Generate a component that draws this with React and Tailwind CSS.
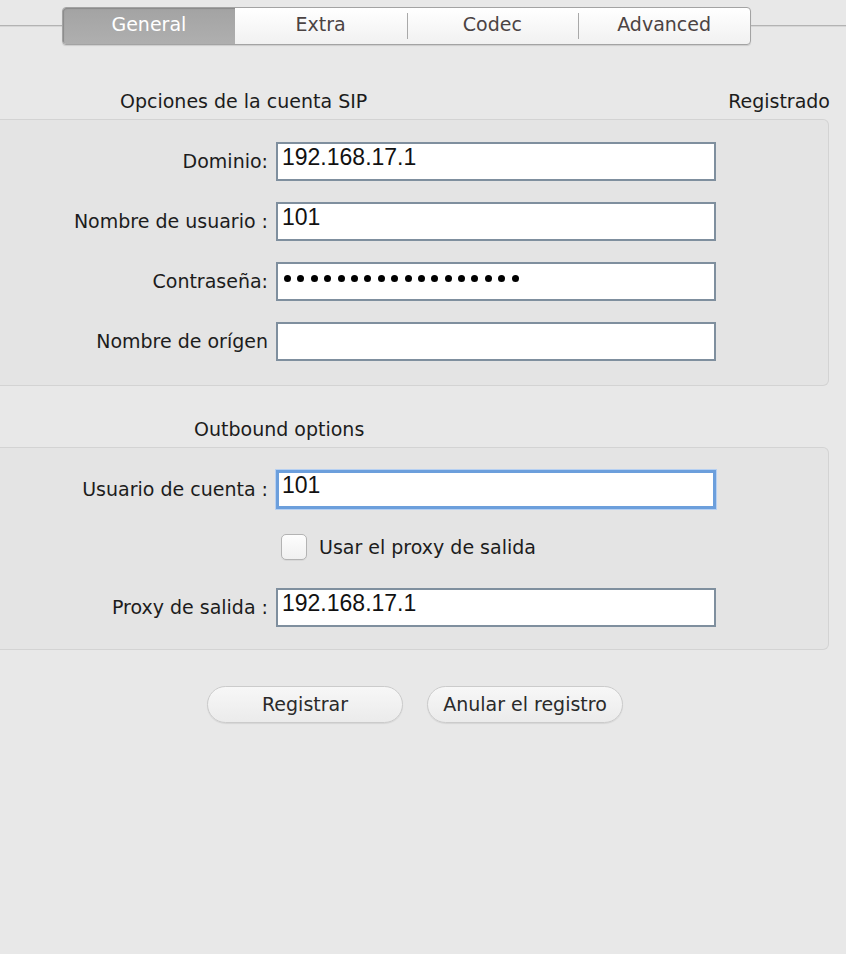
import React from "react";

const label = "font-['DejaVu_Sans',sans-serif]";
const fieldText = "font-['Liberation_Sans',Arial,sans-serif]";

function Field({ value, focused, password }) {
  const base =
    "w-[440px] h-[39px] bg-white pl-[4px] leading-[26px] text-[23px] text-[#111] overflow-hidden " +
    fieldText;
  const border = focused
    ? " border-[3px] border-[#6c9fdc] shadow-[0_0_0_1px_#b6d0f2]"
    : " border-2 border-[#7f8f9e]";
  return (
    <div className={base + border}>
      {password ? (
        <div className="flex items-center gap-[6.4px] h-[26px] pl-[2px] pt-[2px]">
          {Array.from({ length: 18 }).map((_, i) => (
            <span key={i} className="w-[7px] h-[7px] rounded-full bg-black" />
          ))}
        </div>
      ) : (
        <span className={focused ? "relative -top-px -left-px" : ""}>{value}</span>
      )}
    </div>
  );
}

function Row({ text, children }) {
  return (
    <div className="flex items-center">
      <div className="w-[276px] pr-[8px] text-right shrink-0">{text}</div>
      {children}
    </div>
  );
}

function Tab({ text, selected, sep }) {
  return (
    <div className="flex-1 flex items-center relative">
      {sep && <div className="absolute left-0 top-[5px] bottom-[5px] w-px bg-[#a9a9a9]" />}
      <div
        className={
          "flex-1 h-full flex items-center justify-center pb-[3px] " +
          (selected
            ? "bg-gradient-to-b from-[#a3a3a3] to-[#afafaf] text-white rounded-l-[3px] shadow-[inset_1px_1px_1px_#8a8a8a]"
            : "text-[#4b4343]")
        }
      >
        {text}
      </div>
    </div>
  );
}

export default function App() {
  return (
    <div className={"w-[846px] h-[954px] bg-[#e8e8e8] text-[19px] text-[#1c1c1c] overflow-hidden " + label}>
      {/* tab bar */}
      <div className="flex items-center pt-[7px]">
        <div className="w-[62px] h-[2px] bg-[#b3b3b3] border-b border-[#d6d6d6]" />
        <div className="w-[689px] h-[38px] flex rounded-[4px] border border-[#a3a3a3] bg-gradient-to-b from-[#ffffff] to-[#f1f1f1] shadow-[0_1px_1px_rgba(0,0,0,0.12)] overflow-hidden">
          <Tab text="General" selected />
          <Tab text="Extra" />
          <Tab text="Codec" sep />
          <Tab text="Advanced" sep />
        </div>
        <div className="flex-1 h-[2px] bg-[#b3b3b3] border-b border-[#d6d6d6]" />
      </div>

      {/* section 1 */}
      <div className="flex items-center mt-[45px] h-[22px] leading-[22px] pr-[16px]">
        <div className="ml-[120px]">Opciones de la cuenta SIP</div>
        <div className="ml-auto">Registrado</div>
      </div>
      <div className="mt-[7px] mr-[17px] h-[267px] border border-l-0 border-[#d3d3d3] rounded-r-[6px] bg-[#e4e4e4] pt-[22px] flex flex-col gap-[21px]">
        <Row text="Dominio:">
          <Field value="192.168.17.1" />
        </Row>
        <Row text="Nombre de usuario :">
          <Field value="101" />
        </Row>
        <Row text="Contraseña:">
          <Field password />
        </Row>
        <Row text="Nombre de orígen">
          <Field value="" />
        </Row>
      </div>

      {/* section 2 */}
      <div className="mt-[32px] h-[22px] leading-[22px]">
        <div className="ml-[194px]">Outbound options</div>
      </div>
      <div className="mt-[7px] mr-[17px] h-[203px] border border-l-0 border-[#d3d3d3] rounded-r-[6px] bg-[#e4e4e4] pt-[22px] flex flex-col">
        <Row text="Usuario de cuenta :">
          <Field value="101" focused />
        </Row>
        <div className="flex items-center pl-[281px] mt-[24px] gap-[12px]">
          <div className="w-[26px] h-[26px] rounded-[5px] border border-[#b3b3b3] bg-gradient-to-b from-[#fdfdfd] to-[#f0f0f0] shadow-[0_1px_0_rgba(0,0,0,0.05)]" />
          <div>Usar el proxy de salida</div>
        </div>
        <div className="mt-[26px]">
          <Row text="Proxy de salida :">
            <Field value="192.168.17.1" />
          </Row>
        </div>
      </div>

      {/* buttons */}
      <div className="flex mt-[36px] pl-[207px] gap-[24px]">
        <button className="w-[196px] h-[37px] rounded-full border border-[#cbcbcb] bg-gradient-to-b from-[#f7f7f7] to-[#ebebeb] text-[#2a2a2a] shadow-[0_1px_1px_rgba(0,0,0,0.08)]">
          Registrar
        </button>
        <button className="w-[196px] h-[37px] rounded-full border border-[#cbcbcb] bg-gradient-to-b from-[#f7f7f7] to-[#ebebeb] text-[#2a2a2a] shadow-[0_1px_1px_rgba(0,0,0,0.08)]">
          Anular el registro
        </button>
      </div>
    </div>
  );
}
